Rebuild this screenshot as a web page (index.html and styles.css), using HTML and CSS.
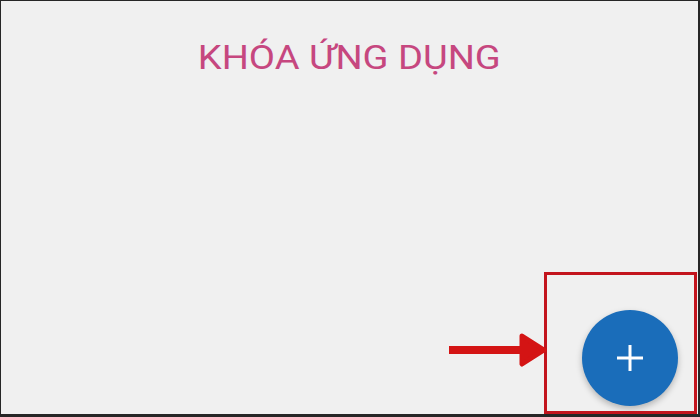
FILE: index.html
```html
<!DOCTYPE html>
<html lang="vi">
<head>
<meta charset="utf-8">
<title>Khóa ứng dụng</title>
<link rel="stylesheet" href="styles.css">
</head>
<body>
<div class="frame">
  <h1 class="title">KHÓA ỨNG DỤNG</h1>
  <div class="content"></div>
  <button class="fab" aria-label="Thêm">
    <svg width="30" height="30" viewBox="0 0 30 30"><path d="M15 2V28M2 15H28" stroke="#fff" stroke-width="3" fill="none"/></svg>
  </button>
  <div class="highlight"></div>
  <svg class="arrow" width="100" height="40" viewBox="0 0 100 40">
    <rect x="0" y="13" width="76" height="8" fill="#d41414"/>
    <polygon points="73,3 95,17 73,31" fill="#d41414" stroke="#d41414" stroke-width="5" stroke-linejoin="round"/>
  </svg>
</div>
</body>
</html>
```
FILE: styles.css
```css
html, body {
  margin: 0;
  padding: 0;
  background: #1e1e1e;
}
.frame {
  position: relative;
  box-sizing: border-box;
  width: 700px;
  height: 417px;
  background: #f0f0f0;
  border-style: solid;
  border-color: #262626;
  border-width: 1px 2px 3px 1px;
  display: flex;
  flex-direction: column;
  align-items: center;
  padding-top: 36px;
  font-family: Roboto, "Noto Sans", sans-serif;
  overflow: hidden;
}
.title {
  margin: 0;
  font-weight: 400;
  font-size: 34px;
  line-height: normal;
  color: #c6477f;
  letter-spacing: 0;
  transform: scaleX(1.12);
}
.content {
  flex: 1;
}
.fab {
  position: absolute;
  left: 581px;
  top: 309px;
  width: 96px;
  height: 96px;
  border: none;
  border-radius: 50%;
  background: #1a6dba;
  box-shadow: 0 3px 6px rgba(0,0,0,0.25);
  display: flex;
  align-items: center;
  justify-content: center;
  padding: 0;
}
.highlight {
  position: absolute;
  left: 543px;
  top: 271px;
  width: 153px;
  height: 142px;
  box-sizing: border-box;
  border: 3px solid #c3141d;
}
.arrow {
  position: absolute;
  left: 448px;
  top: 332px;
}
```
